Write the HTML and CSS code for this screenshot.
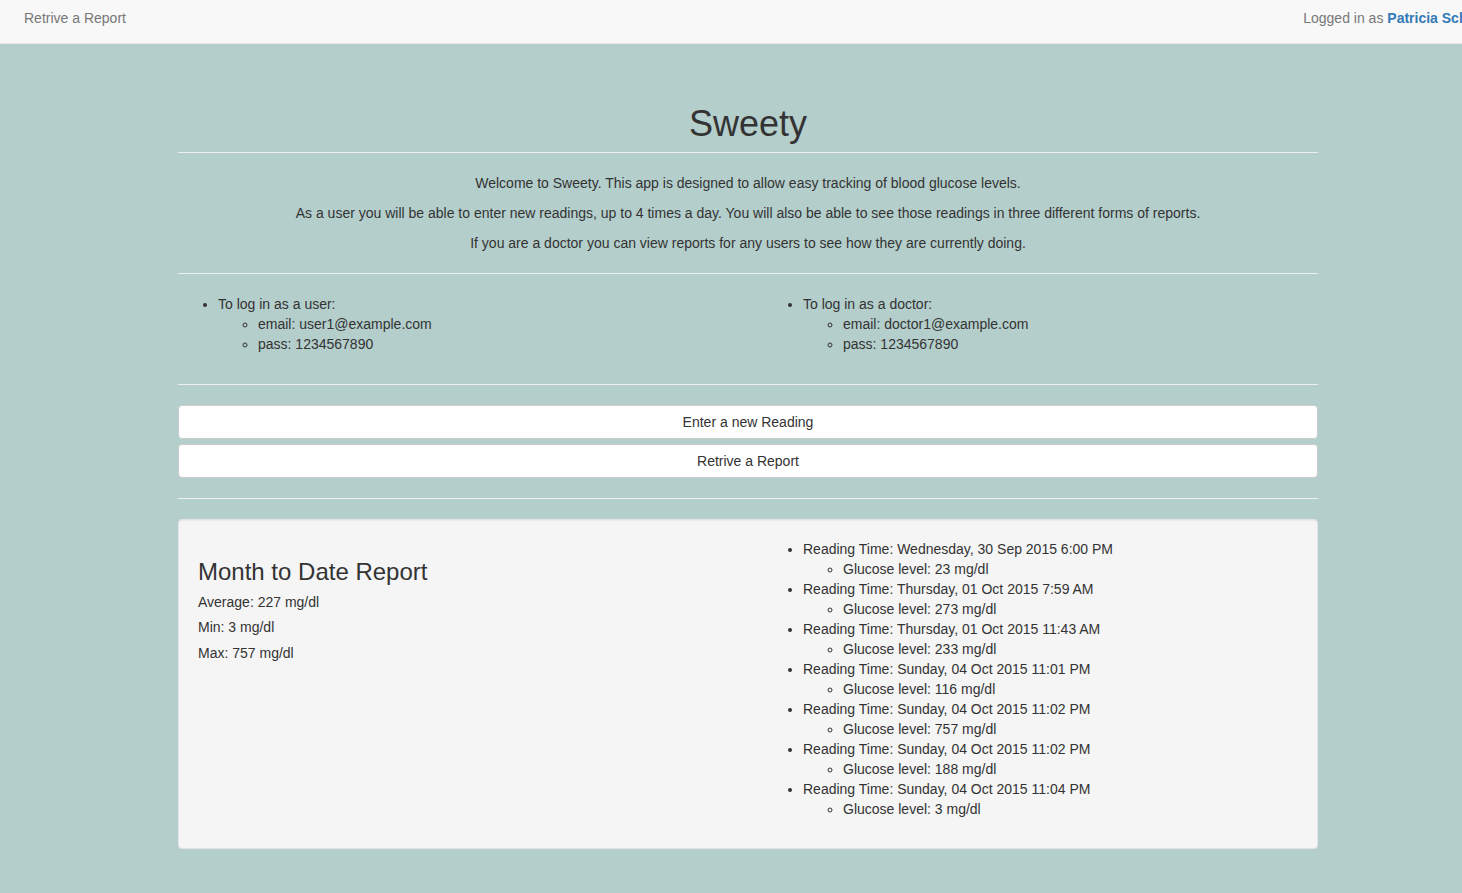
FILE: index.html
```html
<!DOCTYPE html>
<html>
<head>
<meta charset="utf-8">
<title>Sweety</title>
<link rel="stylesheet" href="styles.css">
</head>
<body>
<div class="page">
  <nav class="navbar">
    <a class="nav-link" href="#">Retrive a Report</a>
    <p class="nav-user">Logged in as <a class="user-name" href="#">Patricia Schmidt</a></p>
  </nav>
  <main class="container">
    <h1 class="title">Sweety</h1>
    <hr class="rule">
    <div class="intro">
      <p>Welcome to Sweety. This app is designed to allow easy tracking of blood glucose levels.</p>
      <p>As a user you will be able to enter new readings, up to 4 times a day. You will also be able to see those readings in three different forms of reports.</p>
      <p>If you are a doctor you can view reports for any users to see how they are currently doing.</p>
    </div>
    <hr class="rule">
    <div class="row">
      <div class="col">
        <ul class="list">
          <li>To log in as a user:
            <ul class="sublist">
              <li>email: user1@example.com</li>
              <li>pass: 1234567890</li>
            </ul>
          </li>
        </ul>
      </div>
      <div class="col">
        <ul class="list">
          <li>To log in as a doctor:
            <ul class="sublist">
              <li>email: doctor1@example.com</li>
              <li>pass: 1234567890</li>
            </ul>
          </li>
        </ul>
      </div>
    </div>
    <hr class="rule">
    <div class="buttons">
      <a class="btn" href="#">Enter a new Reading</a>
      <a class="btn" href="#">Retrive a Report</a>
    </div>
    <hr class="rule">
    <section class="well">
      <div class="row inner-row">
        <div class="col">
          <h3 class="report-title">Month to Date Report</h3>
          <h5 class="stat">Average: 227 mg/dl</h5>
          <h5 class="stat">Min: 3 mg/dl</h5>
          <h5 class="stat">Max: 757 mg/dl</h5>
        </div>
        <div class="col">
          <ul class="list">
            <li>Reading Time: Wednesday, 30 Sep 2015 6:00 PM
              <ul class="sublist"><li>Glucose level: 23 mg/dl</li></ul></li>
            <li>Reading Time: Thursday, 01 Oct 2015 7:59 AM
              <ul class="sublist"><li>Glucose level: 273 mg/dl</li></ul></li>
            <li>Reading Time: Thursday, 01 Oct 2015 11:43 AM
              <ul class="sublist"><li>Glucose level: 233 mg/dl</li></ul></li>
            <li>Reading Time: Sunday, 04 Oct 2015 11:01 PM
              <ul class="sublist"><li>Glucose level: 116 mg/dl</li></ul></li>
            <li>Reading Time: Sunday, 04 Oct 2015 11:02 PM
              <ul class="sublist"><li>Glucose level: 757 mg/dl</li></ul></li>
            <li>Reading Time: Sunday, 04 Oct 2015 11:02 PM
              <ul class="sublist"><li>Glucose level: 188 mg/dl</li></ul></li>
            <li>Reading Time: Sunday, 04 Oct 2015 11:04 PM
              <ul class="sublist"><li>Glucose level: 3 mg/dl</li></ul></li>
          </ul>
        </div>
      </div>
    </section>
  </main>
</div>
</body>
</html>
```

FILE: styles.css
```css
html, body {
  margin: 0;
  padding: 0;
  overflow: hidden;
}
body {
  background: #b3cecb;
  font-family: "Liberation Sans", Arial, sans-serif;
  font-size: 14px;
  line-height: 20px;
  color: #333;
}
.page {
  width: 1496px;
  min-height: 893px;
}
.navbar {
  height: 43px;
  background: #f8f8f8;
  border-bottom: 1px solid #e7e7e7;
  display: flex;
  align-items: center;
  justify-content: space-between;
  padding: 0 0 0 24px;
  box-sizing: content-box;
  width: 1473px;
}
.nav-link {
  color: #777;
  text-decoration: none;
  margin-top: -7px;
}
.nav-user {
  margin: -7px 0 0 0;
  color: #777;
  white-space: nowrap;
}
.user-name {
  color: #337ab7;
  font-weight: bold;
  text-decoration: none;
}
.container {
  width: 1140px;
  margin: 0 auto;
  padding: 1px 0 40px;
}
.title {
  font-size: 36px;
  font-weight: 500;
  line-height: 39.6px;
  text-align: center;
  margin: 59px 0 8px;
}
.rule {
  border: 0;
  border-top: 1px solid #eee;
  margin: 0 0 20px;
}
.intro {
  text-align: center;
}
.intro p {
  margin: 0 0 10px;
}
.intro + .rule {
  margin-top: 20px;
}
.row {
  display: flex;
  margin: 0 -15px;
}
.col {
  flex: 1 1 0;
  padding: 0 15px;
}
.list {
  margin: 0 0 10px;
  padding-left: 40px;
  list-style: disc;
}
.sublist {
  margin: 0;
  padding-left: 40px;
  list-style: circle;
}
.row + .rule {
  margin-top: 20px;
}
.buttons {
  display: flex;
  flex-direction: column;
  gap: 5px;
}
.btn {
  display: block;
  height: 34px;
  box-sizing: border-box;
  padding: 6px 12px;
  background: #fff;
  border: 1px solid #ccc;
  border-radius: 4px;
  color: #333;
  text-align: center;
  text-decoration: none;
}
.buttons + .rule {
  margin-top: 20px;
}
.well {
  background: #f5f5f5;
  border: 1px solid #e3e3e3;
  border-radius: 4px;
  padding: 19px;
  box-shadow: inset 0 1px 1px rgba(0,0,0,.05);
}
.inner-row .col {
  display: flow-root;
}
.report-title {
  font-size: 24px;
  font-weight: 500;
  line-height: 26.4px;
  margin: 20px 0 10px;
}
.stat {
  font-size: 14px;
  font-weight: 500;
  line-height: 15.4px;
  margin: 10px 0;
}
```
